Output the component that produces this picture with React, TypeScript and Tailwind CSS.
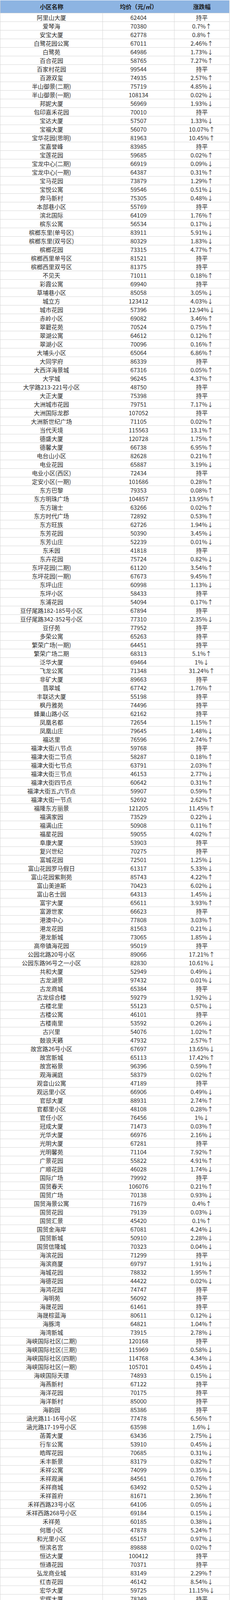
import React from "react";

const RAW = `阿里山大厦|62404|p
爱琴海|70380|0.7u
安宝大厦|62778|0.8u
白鹭花园公寓|67011|2.46u
白鹭苑|64986|1.73d
百合花园|58765|7.27u
百家村花园|99544|p
百源双玺|74935|2.57u
半山御景(二期)|75719|4.85d
半山御景(一期)|108134|0.02d
邦妮大厦|56969|1.93d
包印嘉禾花园|70010|p
宝达大厦|57507|1.33d
宝福大厦|56070|10.07u
宝华花园(思明)|81963|10.45u
宝嘉誉峰|83985|p
宝莲花园|59685|0.02u
宝龙中心(二期)|66919|0.09d
宝龙中心(一期)|64387|0.31u
宝马花园|73879|1.29u
宝悦公寓|59546|0.51d
奔马新村|75305|0.48d
本部巷小区|55769|p
滨北国际|64109|1.76u
槟东公寓|56534|0.17d
槟榔东里(单号区)|83911|5.91d
槟榔东里(双号区)|80329|1.83d
槟榔花园|73315|4.77u
槟榔西里单号区|81521|p
槟榔西里双号区|81375|p
不见天|71011|0.18u
彩霞公寓|69940|p
草埔巷小区|85058|3.05d
城立方|123412|4.03d
城市花园|57396|12.94d
赤岭小区|69082|3.46u
翠碧花苑|70524|0.75u
翠湖公寓|64612|0.12u
翠湖小区|70096|0.16u
大埔头小区|65064|6.86u
大同学府|86339|p
大西洋海景城|67316|0.05u
大学城|96245|4.37u
大学路213-221号小区|48750|p
大正大厦|75398|p
大洲城市花园|79751|7.17d
大洲国际龙郡|107052|p
大洲新世纪广场|71105|0.02u
当代天境|115563|13.1u
德盛大厦|120728|1.75u
德馨大厦|66738|6.95u
电台山小区|82628|0.21u
电业花园|65887|3.19d
电业小区(西区)|72434|p
定安小区(一期)|101686|0.28u
东方巴黎|79353|0.08u
东方明珠广场|104857|13.95u
东方瑞士|63266|0.02u
东方时代广场|72892|0.53u
东方旺族|62726|1.94d
东芳花园|50390|3.45d
东芳山庄|52239|0.01d
东禾园|41818|p
东卉花园|75724|0.82d
东坪花园(二期)|61120|3.54u
东坪花园(一期)|67673|9.45u
东坪山庄|60998|1.13d
东坪小区|58433|p
东浦花园|54094|0.17u
豆仔尾路182-185号小区|67894|p
豆仔尾路342-352号小区|77310|2.35d
豆仔苑|77952|p
多荣公寓|65263|p
繁荣广场(一期)|64451|p
繁荣广场二期|68313|5.1u
泛华大厦|69464|1d
飞龙公寓|71348|31.24u
非矿大厦|89663|p
翡翠城|67742|1.76u
丰联达大厦|55198|p
枫丹雅苑|74496|p
蜂巢山路小区|62162|p
凤凰名都|72654|1.15u
凤凰山庄|79645|1.48d
福达里|76596|2.74u
福津大街八节点|59768|p
福津大街二节点|58287|0.18u
福津大街七节点|63791|2.03u
福津大街三节点|46153|2.77d
福津大街四节点|60642|0.31u
福津大街五,六节点|59907|0.59u
福津大街一节点|52692|2.62u
福隆东方丽景|121205|11.45u
福满家园|73529|0.22d
福满山庄|50908|0.11u
福星花园|59055|4.02u
阜康大厦|53903|p
复兴世纪|70275|p
富城花园|72501|1.25d
富山花园罗马假日|61317|5.33d
富山花园紫荆苑|85743|4.22u
富山美迪斯|70423|6.02d
富山名士园|64313|1.45d
富宇大厦|65611|3.93u
富源世家|66623|p
港澳中心|77808|3.03u
港龙花园|81563|0.21d
港龙新城|73065|1.85d
高帝镇海花园|95019|p
公园北路20号小区|89066|17.21u
公园东路96号之一小区|82830|10.61d
共和大厦|52949|0.49d
古龙湖景|97432|0.01d
古龙商城|65384|p
古龙综合楼|59279|1.92d
古楼北里|55123|0.57d
古楼公寓|46101|p
古楼南里|53592|0.26d
古兴里|54076|1.02u
鼓浪天籁|47932|2.57u
故宫路26号小区|67697|13.65d
故宫新城|65113|17.42u
故宫裕景|96396|0.59u
观海澜庭|58379|0.02u
观音山公寓|47189|p
观远里小区|66906|0.49d
官邸大厦|88931|2.74u
官都里小区|48108|0.28u
官任小区|76456|1d
冠成大厦|71473|0.03u
光华大厦|66976|2.16d
光明大厦|67281|p
光明馨苑|71104|7.92u
广景花园|55822|4.91u
广顺花园|46028|1.74d
国际广场|79992|p
国贸春天|106076|0.21u
国贸广场|70138|0.93d
国贸海景公寓|71679|0.4u
国贸花园|79139|0.03d
国贸汇景|45420|0.1u
国贸金海岸|67081|4.24d
国贸新城|50910|2.28d
国贸信隆城|70323|0.04d
海滨花园|71299|p
海滨商厦|69797|1.91d
海城花园|78832|1.95u
海德花园|44422|0.02d
海鸿花园|74747|p
海明苑|56092|p
海晟花园|61461|p
海晟棕蓝海|80611|0.12d
海豚湾|64821|1.04u
海湾新城|73915|2.78d
海峡国际社区(二期)|120168|p
海峡国际社区(三期)|115969|0.58d
海峡国际社区(四期)|114768|4.34d
海峡国际社区(一期)|105701|0.45d
海峡国际天璟|74893|0.15d
海燕新村|67122|p
海洋花园|70175|p
海洋新村|85000|p
海韵园|85386|p
涵光路11-16号小区|77478|6.56u
涵光路17-19号小区|63598|1.6d
菡菁大厦|63436|2.75d
行车公寓|53910|0.45d
皓晖花园|70685|0.31d
禾丰新景|83179|0.82u
禾祥公寓|74099|0.35d
禾祥观澜|84561|0.76u
禾祥商城|63492|0.52d
禾祥首府|81671|2.36u
禾祥西路23号小区|64106|0.05d
禾祥西路268号小区|69184|0.15d
禾祥苑|60185|0.38d
何厝小区|47878|5.24u
和光里小区|65157|0.97d
恒滨名宫|89888|0.02u
恒达大厦|100412|p
恒通花园|70371|p
弘龙商业城|83149|2.29u
红杏花园|46142|8.54d
宏华大厦|59725|11.15d
宏辉大厦|78349|p
宏益大厦|63052|0.74d
虹霞大厦|132917|3.43d
洪山柄北区|50717|1.86u
鸿山新村|81606|0.08u
鸿禧花园|63259|p
鸿运大厦|51564|p
后海墘巷小区|79557|p
湖北大厦|79031|p
湖滨东路8-12号小区|64126|1.17u
湖滨名宫|76871|15.54d
湖滨南路142-144号小区|52137|3.46d
湖滨南路164号小区|65334|1.46d
湖滨南路248号小区|85407|4.97d
湖滨南路268-270号小区|69884|5.54d
湖滨南路282号小区|79718|p
湖滨南路44-48号小区|80355|p
湖滨南路52号小区|74530|3.19u
湖滨雅居|75957|6.19u
湖东花园|84585|p
湖光路88-91号小区|73082|p
湖明丽景|76058|4.2u
虎园路10号小区|111677|2.62u
华尔顿1275|82277|p
华菲大厦|106219|3.32u
华孚花园|62582|2.43d
华富大厦|67297|p
华鸿花园|68780|2.64u
华林东盛花园(一期)|58732|0.66u
华林东盛花园二期|53966|0.12u
华林花园(二期)|53221|0.54d
华林花园(一期)|48887|p
华林花园三期|61841|p
华林紫薇小区|88611|34.91u
华年邨|70384|9.35u
华普大厦|52662|0.47u
华侨海景城|84695|0.13u
华润苑|93348|p
华盛花园|72608|0.68u
华天花园|68241|2.03d
华新苑|81363|p
华鑫明都|83147|0.45u
华星大厦|53402|p
华岳山庄(一二期)|54195|3.37d
皇府御园|89463|p`;

type Row = { name: string; price: string; change: string };

const rows: Row[] = RAW.trim()
  .split("\n")
  .map((line) => {
    const [name, price, c] = line.trim().split("|");
    let change = "持平";
    if (c !== "p") {
      const dir = c.slice(-1) === "u" ? "↑" : "↓";
      change = `${c.slice(0, -1)}%${dir}`;
    }
    return { name, price, change };
  });

const FONT = { fontFamily: '"Noto Sans CJK SC", "Noto Sans", sans-serif' };

export default function App() {
  return (
    <div className="w-[588px] overflow-hidden bg-white text-[#2b2b2b]" style={FONT}>
      <div className="w-[587px] border-l border-r border-[#d6d6d6]">
        <div className="mt-[1px] h-[32px] bg-[#8db4e2] flex items-center text-[15px] leading-[20px] font-bold text-[#1c1c1c] overflow-hidden">
          <div className="w-[262px] shrink-0 text-center">小区名称</div>
          <div className="w-[183px] shrink-0 text-center">均价（元/㎡）</div>
          <div className="flex-1 text-center">涨跌幅</div>
        </div>
        {rows.map((r, i) => (
          <div
            key={i}
            className="h-[22px] flex border-t border-[#d6d6d6] text-[15px] leading-[20px] overflow-hidden"
          >
            <div className="w-[262px] shrink-0 h-full flex items-center justify-center border-r border-[#d6d6d6] whitespace-nowrap">
              {r.name}
            </div>
            <div className="w-[183px] shrink-0 h-full flex items-center justify-center border-r border-[#d6d6d6]">
              {r.price}
            </div>
            <div className="flex-1 h-full flex items-center justify-center whitespace-nowrap">{r.change}</div>
          </div>
        ))}
      </div>
    </div>
  );
}
